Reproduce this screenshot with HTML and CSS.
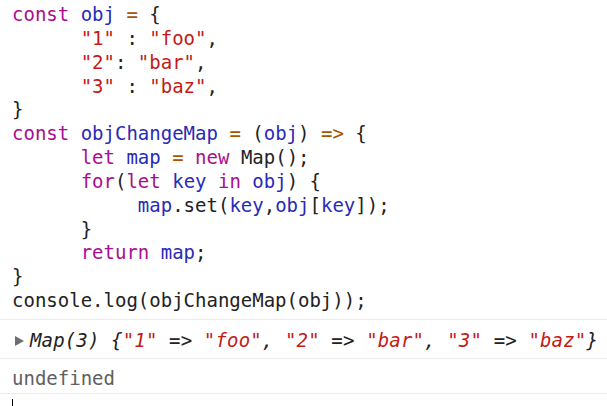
FILE: index.html
```html
<!DOCTYPE html>
<html>
<head>
<meta charset="utf-8">
<link rel="stylesheet" href="styles.css">
</head>
<body>
<div class="console">
<pre class="code"><span class="kw">const</span> <span class="var">obj</span> <span class="op">=</span> {
      <span class="str">"1"</span> : <span class="str">"foo"</span>,
      <span class="str">"2"</span>: <span class="str">"bar"</span>,
      <span class="str">"3"</span> : <span class="str">"baz"</span>,
}
<span class="kw">const</span> <span class="var">objChangeMap</span> <span class="op">=</span> (<span class="var">obj</span>) <span class="op">=&gt;</span> {
      <span class="kw">let</span> <span class="var">map</span> <span class="op">=</span> <span class="kw">new</span> Map();
      <span class="kw">for</span>(<span class="kw">let</span> <span class="var">key</span> <span class="kw">in</span> <span class="var">obj</span>) {
           <span class="var">map</span>.set(<span class="var">key</span>,<span class="var">obj</span>[<span class="var">key</span>]);
      }
      <span class="kw">return</span> <span class="var">map</span>;
}
console.log(objChangeMap(obj));</pre>
<div class="row row-map"><span class="tri"></span><span class="it">Map(3) {<span class="str">"1"</span> =&gt; <span class="str">"foo"</span>, <span class="str">"2"</span> =&gt; <span class="str">"bar"</span>, <span class="str">"3"</span> =&gt; <span class="str">"baz"</span>}</span></div>
<div class="row row-undef">undefined</div>
<div class="row row-prompt"><span class="caret"></span></div>
</div>
</body>
</html>
```

FILE: styles.css
```css
html, body {
  margin: 0;
  padding: 0;
  background: #ffffff;
}
.console {
  font-family: "DejaVu Sans Mono", "Liberation Mono", monospace;
  font-size: 19px;
  line-height: 23.85px;
  color: #222222;
}
.code {
  margin: 0;
  padding: 3px 0 6px 12px;
  font: inherit;
  white-space: pre;
}
.kw { color: #aa0d91; }
.var { color: #2a2ab6; }
.op { color: #a85400; }
.str { color: #c41a16; }
.row {
  border-top: 1px solid #ececec;
  padding-left: 12px;
  white-space: pre;
}
.row-map {
  display: flex;
  align-items: center;
  padding-top: 9px;
  padding-bottom: 5px;
  padding-left: 15px;
}
.tri {
  width: 0;
  height: 0;
  border-top: 5px solid transparent;
  border-bottom: 5px solid transparent;
  border-left: 9px solid #6e6e6e;
  margin-right: 6px;
}
.it {
  font-style: italic;
  letter-spacing: 0.15px;
}
.row-undef {
  color: #606060;
  padding-top: 8px;
  padding-bottom: 2px;
}
.row-prompt {
  height: 14px;
  padding-top: 4px;
}
.caret {
  display: block;
  width: 1px;
  height: 8px;
  margin-top: 1px;
  background: #000;
}
```
